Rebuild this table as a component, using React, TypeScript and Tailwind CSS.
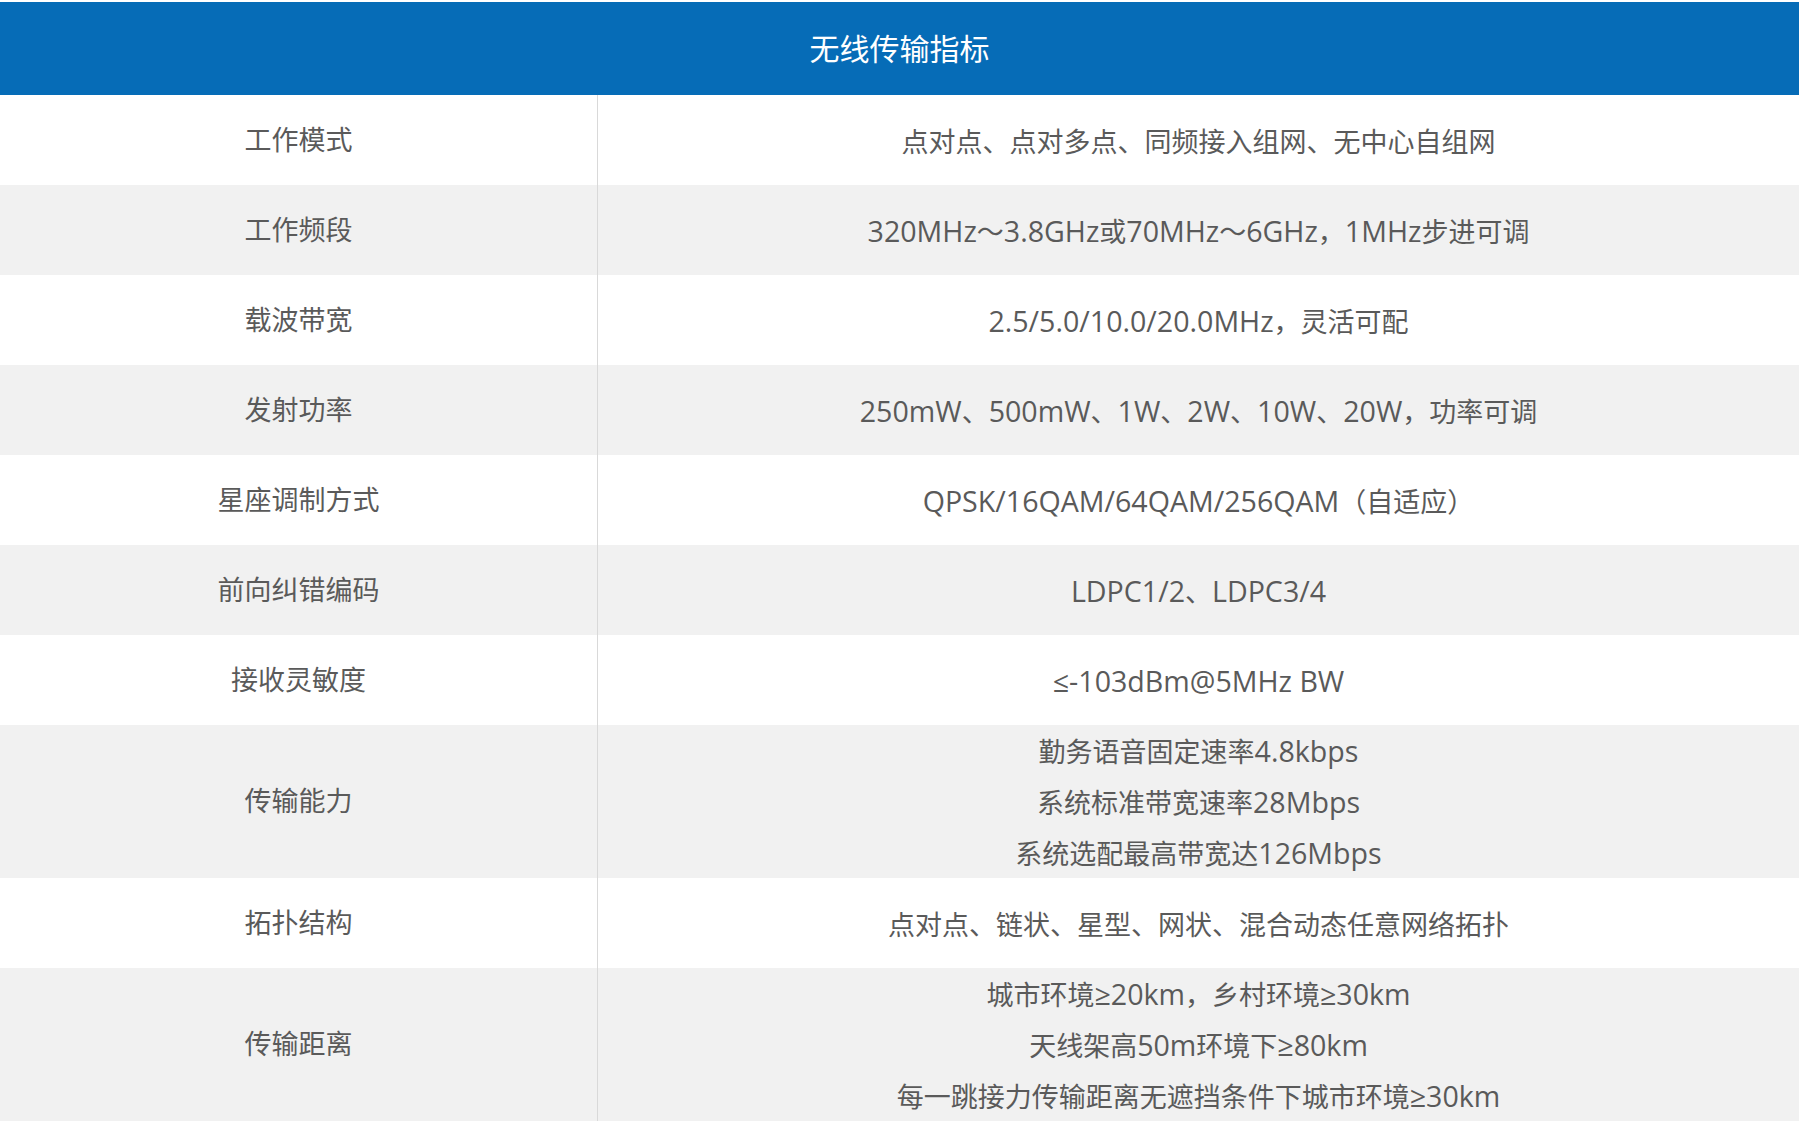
const rows: { label: string; lines: string[] }[] = [
  { label: '工作模式', lines: ['点对点、点对多点、同频接入组网、无中心自组网'] },
  { label: '工作频段', lines: ['320MHz～3.8GHz或70MHz～6GHz，1MHz步进可调'] },
  { label: '载波带宽', lines: ['2.5/5.0/10.0/20.0MHz，灵活可配'] },
  { label: '发射功率', lines: ['250mW、500mW、1W、2W、10W、20W，功率可调'] },
  { label: '星座调制方式', lines: ['QPSK/16QAM/64QAM/256QAM（自适应）'] },
  { label: '前向纠错编码', lines: ['LDPC1/2、LDPC3/4'] },
  { label: '接收灵敏度', lines: ['≤-103dBm@5MHz BW'] },
  {
    label: '传输能力',
    lines: ['勤务语音固定速率4.8kbps', '系统标准带宽速率28Mbps', '系统选配最高带宽达126Mbps'],
  },
  { label: '拓扑结构', lines: ['点对点、链状、星型、网状、混合动态任意网络拓扑'] },
  {
    label: '传输距离',
    lines: ['城市环境≥20km，乡村环境≥30km', '天线架高50m环境下≥80km', '每一跳接力传输距离无遮挡条件下城市环境≥30km'],
  },
]

// CJK runs render a touch smaller than the latin ones in the original
function Mixed({ text }: { text: string }) {
  const parts = text.split(/([\u3000-\u9fff\uff00-\uffef]+)/).filter(Boolean)
  return (
    <>
      {parts.map((p, i) =>
        /[\u3000-\u9fff\uff00-\uffef]/.test(p) ? (
          <span key={i} className="text-[27px]">
            {p}
          </span>
        ) : (
          <span key={i}>{p}</span>
        )
      )}
    </>
  )
}

export default function App() {
  return (
    <div
      className="min-h-screen bg-white pt-[2px]"
      style={{ fontFamily: '"Open Sans", "Noto Sans CJK SC", sans-serif' }}
    >
      <div className="w-[1799px]">
        <div className="flex h-[93px] items-center justify-center bg-[#066cb7] text-[30px] text-white">
          无线传输指标
        </div>
        {rows.map((row, i) => (
          <div
            key={row.label}
            className={`grid grid-cols-[598px_1fr] text-[28.6px] text-[#5a5a5a] ${
              i % 2 === 0 ? 'bg-white' : 'bg-[#f1f1f1]'
            }`}
          >
            <div className="flex min-h-[90px] items-center justify-center border-r border-[#d9d9d9]">
              <Mixed text={row.label} />
            </div>
            <div className="flex min-h-[90px] flex-col items-center justify-center">
              {row.lines.map((line) => (
                <div key={line} className="h-[51px] leading-[51px]">
                  <Mixed text={line} />
                </div>
              ))}
            </div>
          </div>
        ))}
      </div>
    </div>
  )
}
